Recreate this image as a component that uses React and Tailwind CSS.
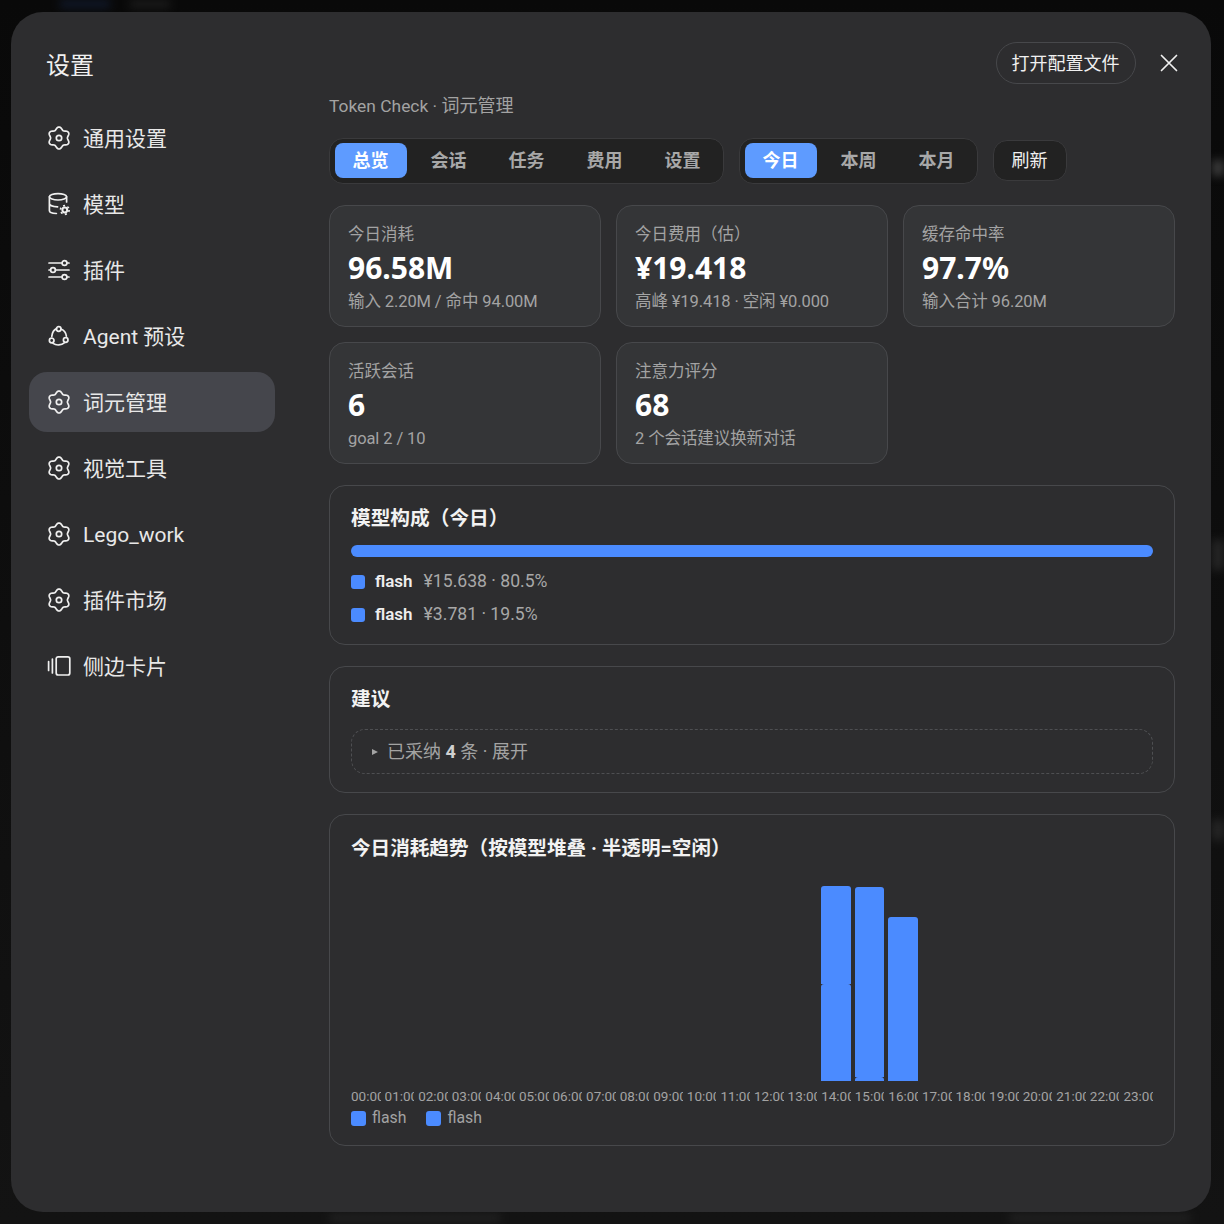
import React from "react";

const lobes = (() => {
  // six-lobed gear outline, lobes at top, bottom and the four diagonals
  const pts = [];
  for (let i = 0; i <= 96; i++) {
    const t = (i / 96) * Math.PI * 2;
    const r = 9.7 + 1.3 * Math.cos(6 * t);
    pts.push(`${(12 + r * Math.sin(t)).toFixed(2)} ${(12 - r * Math.cos(t)).toFixed(2)}`);
  }
  return "M" + pts.join("L") + "Z";
})();

const Svg = ({ children }) => (
  <svg width="24" height="24" viewBox="0 0 24 24" fill="none" stroke="#efefef" strokeWidth="1.7" strokeLinecap="round" strokeLinejoin="round" className="shrink-0">
    {children}
  </svg>
);

const Gear = () => (
  <Svg>
    <path d={lobes} />
    <circle cx="12" cy="12" r="2.7" />
  </Svg>
);
const Db = () => (
  <Svg>
    <ellipse cx="11" cy="4.8" rx="8.6" ry="3.2" />
    <path d="M2.4 4.8v13.6c0 1.8 3.2 3 7 3.1M19.6 4.8v5.2M2.4 11.6c0 1.8 3.4 3.2 8.2 3.2" />
    <circle cx="17.8" cy="18" r="2.4" strokeWidth="2" />
    <circle cx="17.8" cy="18" r="4.3" strokeWidth="1.7" strokeDasharray="2 2.5" strokeLinecap="butt" />
  </Svg>
);
const Sliders = () => (
  <Svg>
    <path d="M2 5h13M20 5h2M2 19h13M20 19h2M8.5 12H22M2 12h1.5" />
    <circle cx="17.5" cy="5" r="2.4" />
    <circle cx="6" cy="12" r="2.4" />
    <circle cx="17.5" cy="19" r="2.4" />
  </Svg>
);
const Agent = () => (
  <Svg>
    <circle cx="11.7" cy="5" r="2.3" />
    <circle cx="4.7" cy="16.5" r="2.3" />
    <circle cx="18.7" cy="16" r="2.3" />
    <path d="M9.6 4.6C7 5.6 5.2 8.4 4.8 12.4M14 5c2.8 1 5 3.8 5.4 7.2M6 19.4c3.4 2.4 8.4 2 11.6-.8" />
  </Svg>
);
const Side = () => (
  <Svg>
    <rect x="9.2" y="2.8" width="13.6" height="18.2" rx="2" />
    <path d="M1.6 7.5v9M5.4 5v14" />
  </Svg>
);

const nav = [
  ["通用设置", Gear],
  ["模型", Db],
  ["插件", Sliders],
  ["Agent 预设", Agent],
  ["词元管理", Gear, true],
  ["视觉工具", Gear],
  ["Lego_work", Gear],
  ["插件市场", Gear],
  ["侧边卡片", Side],
];

const Tab = ({ label, active }) => (
  <div className={`w-[72px] h-[35px] rounded-lg flex items-center justify-center pr-[1px] text-[18px] font-bold ${active ? "bg-[#5e9bff] text-white" : "text-[#a8a8a8]"}`}>
    {label}
  </div>
);

const Stat = ({ label, value, sub }) => (
  <div className="h-[122px] rounded-2xl border border-[#47484b] bg-[#343537] px-[18px] pt-[16px]">
    <div className="text-[16.5px] leading-[25px] text-[#a3a3a3]">{label}</div>
    <div className="text-[30px] leading-[42px] font-bold text-white font-['Noto_Sans','Noto_Sans_CJK_SC',sans-serif]">{value}</div>
    <div className="text-[16.5px] leading-[25px] tracking-[-0.1px] text-[#a3a3a3]">{sub}</div>
  </div>
);

const hours = Array.from({ length: 24 }, (_, i) => `${String(i).padStart(2, "0")}:00`);
const bars = { 14: [98, 97], 15: [190, 4], 16: [164, 0] };

const Swatch = ({ big }) => <span className={`rounded-[3px] bg-[#4b8bff] shrink-0 ${big ? "w-[15px] h-[15px]" : "w-[14px] h-[14px]"}`} />;

const Row = ({ value }) => (
  <div className="flex items-center h-[33px]">
    <Swatch />
    <span className="ml-[10px] text-[17px] font-semibold text-[#eeeeee]">flash</span>
    <span className="ml-[11px] text-[17.6px] text-[#a8a8a8]">{value}</span>
  </div>
);

const Blur = ({ className }) => <div className={`absolute blur-[4px] ${className}`} />;

export default function App() {
  return (
    <div className="relative w-[1224px] h-[1224px] bg-gradient-to-b from-[#090909] to-[#131313] pl-[11px] pt-[12px] font-['Roboto','Noto_Sans_CJK_SC',sans-serif] overflow-hidden">
      <Blur className="left-[60px] top-0 w-[50px] h-[8px] bg-[#10182a]" />
      <Blur className="left-[130px] top-0 w-[40px] h-[8px] bg-[#1c1c1c]" />
      <Blur className="left-[1212px] top-[160px] w-[12px] h-[16px] bg-[#3a3a3a]" />
      <Blur className="left-[1212px] top-[540px] w-[12px] h-[30px] bg-[#262626]" />
      <Blur className="left-[1212px] top-[820px] w-[12px] h-[20px] bg-[#262626]" />
      <Blur className="left-[330px] top-[1214px] w-[170px] h-[8px] bg-[#222222]" />
      <Blur className="left-[1010px] top-[1214px] w-[180px] h-[8px] bg-[#222222]" />
      <div className="relative w-[1200px] h-[1200px] rounded-[32px] bg-[#2d2d2f] flex overflow-hidden">
        <aside className="w-[318px] shrink-0 pl-[18px] pr-[54px] pt-[37px]">
          <div className="pl-[18px] -ml-[1px] text-[24px] leading-[34px] text-[#f0f0f0]">设置</div>
          <div className="mt-[25px] flex flex-col gap-[6px]">
            {nav.map(([label, Icon, active]) => (
              <div key={label} className={`h-[60px] rounded-[18px] pl-[18px] flex items-center gap-[12px] text-[21px] text-[#e8e8e8] ${active ? "bg-[#45464c]" : ""}`}>
                <Icon />
                <span className="pt-[4px]">{label}</span>
              </div>
            ))}
          </div>
        </aside>

        <main className="w-[846px] pt-[30px]">
          <div className="h-[42px] flex justify-end items-center -mr-[2px]">
            <div className="h-[42px] w-[140px] rounded-full border border-[#47484b] flex items-center justify-center pr-[1px] text-[18px] text-[#f0f0f0]">打开配置文件</div>
            <svg width="20" height="20" viewBox="0 0 20 20" className="ml-[23px] mr-[-2px]" stroke="#f0f0f0" strokeWidth="1.7" strokeLinecap="round">
              <path d="M2.5 2.5l15 15M17.5 2.5l-15 15" />
            </svg>
          </div>
          <div className="mt-[8px] h-[27px] text-[18px] leading-[27px] text-[#a3a3a3]"><span className="text-[17.4px]">Token Check · </span>词元管理</div>

          <div className="mt-[19px] flex items-start">
            <div className="h-[46px] rounded-[14px] border border-[#3a3a3c] bg-[#222222] pl-[5px] pr-[4px] pt-[4px] flex items-start gap-[6px]">
              <Tab label="总览" active />
              <Tab label="会话" />
              <Tab label="任务" />
              <Tab label="费用" />
              <Tab label="设置" />
            </div>
            <div className="ml-[15px] h-[46px] rounded-[14px] border border-[#3a3a3c] bg-[#222222] pl-[5px] pr-[4px] pt-[4px] flex items-start gap-[6px]">
              <Tab label="今日" active />
              <Tab label="本周" />
              <Tab label="本月" />
            </div>
            <div className="ml-[15px] mt-[2px] w-[74px] h-[41px] rounded-[14px] border border-[#3a3a3c] bg-[#222222] flex items-center justify-center pr-[1px] text-[18px] text-[#f0f0f0]">刷新</div>
          </div>

          <div className="mt-[21px] grid grid-cols-3 gap-[15px]">
            <Stat label="今日消耗" value="96.58M" sub="输入 2.20M / 命中 94.00M" />
            <Stat label="今日费用（估）" value="¥19.418" sub="高峰 ¥19.418 · 空闲 ¥0.000" />
            <Stat label="缓存命中率" value="97.7%" sub="输入合计 96.20M" />
            <Stat label="活跃会话" value="6" sub="goal 2 / 10" />
            <Stat label="注意力评分" value="68" sub="2 个会话建议换新对话" />
          </div>

          <section className="mt-[21px] h-[160px] rounded-2xl border border-[#47484b] px-[21px] pt-[18px]">
            <div className="text-[19.7px] leading-[30px] -mb-[1px] font-bold text-[#f2f2f2]">模型构成（今日）</div>
            <div className="mt-[12px] h-[12px] rounded-full bg-[#4b8bff]" />
            <div className="mt-[8px]">
              <Row value="¥15.638 · 80.5%" />
              <Row value="¥3.781 · 19.5%" />
            </div>
          </section>

          <section className="mt-[21px] h-[127px] rounded-2xl border border-[#47484b] px-[21px] pt-[18px]">
            <div className="text-[19.7px] leading-[30px] font-bold text-[#f2f2f2]">建议</div>
            <div className="mt-[14px] h-[45px] rounded-[14px] border border-dashed border-[#4e4f52] pl-[20px] flex items-center text-[18px] text-[#a3a3a3]">
              <span className="w-0 h-0 border-y-[3.5px] border-y-transparent border-l-[6px] border-l-[#a3a3a3] mr-[9px]" />
              <span>已采纳 <b className="font-bold text-[#d0d0d0]">4</b> 条 · 展开</span>
            </div>
          </section>

          <section className="mt-[21px] h-[332px] rounded-2xl border border-[#47484b] px-[21px] pt-[19px]">
            <div className="text-[19.6px] leading-[30px] font-bold text-[#f2f2f2]">今日消耗趋势（按模型堆叠 · 半透明=空闲）</div>
            <div className="mt-[1px] grid gap-[4px] grid-cols-[repeat(24,minmax(0,1fr))]">
              {hours.map((h, i) => (
                <div key={h} className="min-w-0 flex flex-col">
                  <div className="h-[216px] flex flex-col justify-end">
                    {bars[i] && bars[i].map((v, k) =>
                      v > 0 ? <div key={k} style={{ height: v }} className="bg-[#4b8bff] rounded-t-[3px]" /> : null
                    )}
                  </div>
                  <div className="mt-[5px] h-[20px] overflow-hidden whitespace-nowrap text-[13.5px] leading-[20px] text-[#a3a3a3]">{h}</div>
                </div>
              ))}
            </div>
            <div className="flex items-center gap-[20px] h-[22px] mt-[1px]">
              <div className="flex items-center gap-[6px] text-[15.8px] text-[#a3a3a3]"><Swatch big /><span>flash</span></div>
              <div className="flex items-center gap-[6px] text-[15.8px] text-[#a3a3a3]"><Swatch big /><span>flash</span></div>
            </div>
          </section>
        </main>
      </div>
    </div>
  );
}
